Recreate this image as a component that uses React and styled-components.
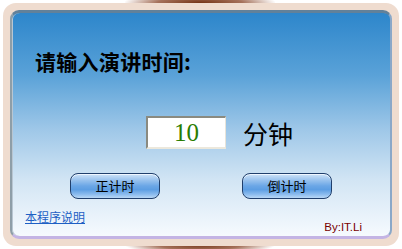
import styled, { createGlobalStyle } from "styled-components";

const Global = createGlobalStyle`
  html, body { margin: 0; padding: 0; background: #ffffff; }
  body { font-family: "Noto Sans CJK SC", "Liberation Sans", sans-serif; }
`;

const Window = styled.div`
  width: 402px;
  height: 249px;
  box-sizing: border-box;
  padding: 3px;
  position: relative;
  overflow: hidden;
`;

const Shade = styled.div`
  position: absolute;
  left: 125px;
  width: 150px;
  height: 22px;
  top: ${(p) => (p.bottom ? "233px" : "-8px")};
  background: radial-gradient(ellipse at center, rgba(115, 50, 20, 1) 0%, rgba(135, 65, 35, 0.75) 40%, rgba(200, 150, 120, 0) 72%);
`;

const Frame = styled.div`
  position: relative;
  height: 100%;
  box-sizing: border-box;
  padding: 7px;
  background: #efdccf;
  border-radius: 13px;
`;

const Panel = styled.div`
  height: 100%;
  box-sizing: border-box;
  border-radius: 9px;
  border-top: 3px solid #62819a;
  border-left: 2px solid #8e9ea8;
  border-right: 2px solid #8aa8c8;
  border-bottom: 3px solid #c4b4e4;
  background: linear-gradient(to bottom, #2d86cb 0%, #5aa2d8 28%, #9ec7e8 52%, #d2e5f4 75%, #f6fafe 100%);
  box-shadow: inset 1px 0 0 #b8c6d2;
  display: flex;
  flex-direction: column;
`;

const Title = styled.div`
  margin: 36px 0 0 23px;
  font-size: 21px;
  font-weight: bold;
  color: #000;
  line-height: 24px;
  letter-spacing: 0.3px;
`;

const InputRow = styled.div`
  display: flex;
  align-items: center;
  gap: 17px;
  margin: 43px 0 0 134px;
`;

const Field = styled.div`
  width: 80px;
  height: 33px;
  box-sizing: border-box;
  background: #fff;
  border-top: 2px solid #8a8a80;
  border-left: 2px solid #8a8a80;
  border-right: 1px solid #e8e4da;
  border-bottom: 2px solid #ece8dc;
  color: #2a7d00;
  font-family: "Liberation Serif", serif;
  font-size: 25px;
  line-height: 29px;
  text-align: center;
`;

const Unit = styled.div`
  font-size: 25px;
  color: #000;
  line-height: 30px;
`;

const ButtonRow = styled.div`
  display: flex;
  gap: 82px;
  margin: 24px 0 0 58px;
`;

const Button = styled.div`
  width: 90px;
  height: 26px;
  box-sizing: border-box;
  border: 1.5px solid #203f6c;
  border-radius: 8px;
  background: linear-gradient(to bottom, #cfe4f8 0%, #a4c9f0 20%, #6aa6e6 50%, #5d9ee3 65%, #8cbcee 85%, #b9d8f6 100%);
  box-shadow: inset 0 1px 0 #eef6ff;
  font-size: 13px;
  line-height: 23px;
  text-align: center;
  color: #000;
`;

const Footer = styled.div`
  display: flex;
  justify-content: space-between;
  align-items: flex-start;
  margin: 10px 28px 0 13px;
`;

const Help = styled.a`
  font-size: 12px;
  color: #1d5fc4;
  text-decoration: underline;
  line-height: 16px;
  cursor: pointer;
`;

const Credit = styled.div`
  margin-top: 11px;
  font-family: "Liberation Sans", sans-serif;
  font-size: 11.5px;
  color: #7a0000;
  line-height: 14px;
`;

export default function App() {
  return (
    <>
      <Global />
      <Window>
        <Shade />
        <Shade bottom />
        <Frame>
          <Panel>
            <Title>请输入演讲时间:</Title>
            <InputRow>
              <Field>10</Field>
              <Unit>分钟</Unit>
            </InputRow>
            <ButtonRow>
              <Button>正计时</Button>
              <Button>倒计时</Button>
            </ButtonRow>
            <Footer>
              <Help>本程序说明</Help>
              <Credit>By:IT.Li</Credit>
            </Footer>
          </Panel>
        </Frame>
      </Window>
    </>
  );
}
